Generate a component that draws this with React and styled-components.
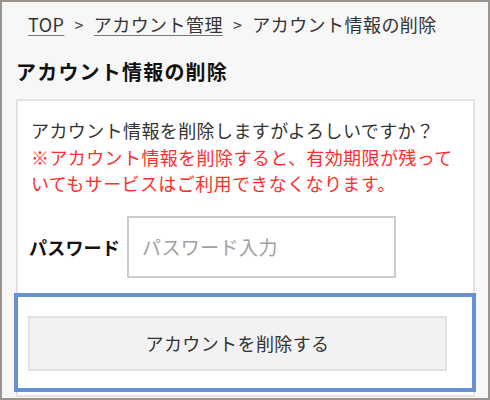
import React from "react";
import styled, { createGlobalStyle } from "styled-components";

const Global = createGlobalStyle`
  html, body { margin: 0; padding: 0; background: #ffffff; }
  body { font-family: "Noto Sans CJK JP", "Noto Sans", sans-serif; }
  * { box-sizing: border-box; }
`;

const Frame = styled.div`
  position: relative;
  width: 490px;
  height: 400px;
  overflow: hidden;
  border: 2px solid #9b938c;
  background: #f7f7f7;
  padding-top: 9px;
  color: #333;
  font-family: "Noto Sans CJK JP", "Noto Sans", sans-serif;
  &::before {
    content: "";
    position: absolute;
    top: -2px;
    left: -2px;
    width: 176px;
    height: 2px;
    background: #cfcfcf;
  }
`;

const Crumbs = styled.nav`
  display: flex;
  align-items: center;
  gap: 8px;
  margin-left: 26px;
  height: 26px;
  font-size: 18px;
  line-height: 26px;
  letter-spacing: 0.45px;
  color: #333;
`;

const CrumbLink = styled.a`
  color: #333;
  text-decoration: underline;
  text-decoration-color: #777;
  text-underline-offset: 3px;
`;

const Sep = styled.span`
  color: #444;
  font-size: 16px;
  padding: 0 2px;
`;

const Heading = styled.h1`
  margin: 21px 0 0 14px;
  height: 28px;
  font-size: 20px;
  line-height: 28px;
  font-weight: 700;
  letter-spacing: 1.2px;
  color: #111;
`;

const Card = styled.section`
  margin: 13px 0 0 14px;
  width: 459px;
  background: #fff;
  border: 2px solid #e3e3e3;
  padding: 16px 2px 3px 13px;
`;

const Message = styled.p`
  margin: 0;
  font-size: 18px;
  line-height: 26.5px;
  letter-spacing: 0.4px;
  color: ${(p) => (p.$warn ? "#ff2d2d" : "#333")};
`;

const Row = styled.div`
  display: flex;
  align-items: center;
  gap: 7px;
  margin: 19px 0 0 -2px;
`;

const Label = styled.label`
  font-size: 18px;
  font-weight: 700;
  color: #111;
  letter-spacing: 0.2px;
`;

const Input = styled.input`
  width: 269px;
  height: 62px;
  border: 2px solid #cccccc;
  background: #fff;
  padding: 0 0 0 13px;
  font-family: inherit;
  font-size: 19px;
  letter-spacing: 0.4px;
  color: #333;
  outline: none;
  &::placeholder { color: #a0a0a0; }
`;

const Highlight = styled.div`
  margin: 15px -5px 0 -17px;
  border: 4px solid #6790d3;
  background: #fff;
  padding: 19px 0 17px 10px;
`;

const DeleteButton = styled.button`
  display: flex;
  align-items: center;
  justify-content: center;
  width: 419px;
  height: 55px;
  background: #f2f2f2;
  border: 2px solid #e2e2e2;
  font-family: inherit;
  font-size: 18px;
  letter-spacing: 0.4px;
  color: #333;
  padding: 0;
  cursor: pointer;
`;

export default function App() {
  return (
    <>
      <Global />
      <Frame>
        <Crumbs>
          <CrumbLink href="#">TOP</CrumbLink>
          <Sep>&gt;</Sep>
          <CrumbLink href="#">アカウント管理</CrumbLink>
          <Sep>&gt;</Sep>
          <span>アカウント情報の削除</span>
        </Crumbs>
        <Heading>アカウント情報の削除</Heading>
        <Card>
          <Message>アカウント情報を削除しますがよろしいですか？</Message>
          <Message $warn>
            ※アカウント情報を削除すると、有効期限が残って
            <br />
            いてもサービスはご利用できなくなります。
          </Message>
          <Row>
            <Label htmlFor="pw">パスワード</Label>
            <Input id="pw" type="password" placeholder="パスワード入力" />
          </Row>
          <Highlight>
            <DeleteButton type="button">アカウントを削除する</DeleteButton>
          </Highlight>
        </Card>
      </Frame>
    </>
  );
}
